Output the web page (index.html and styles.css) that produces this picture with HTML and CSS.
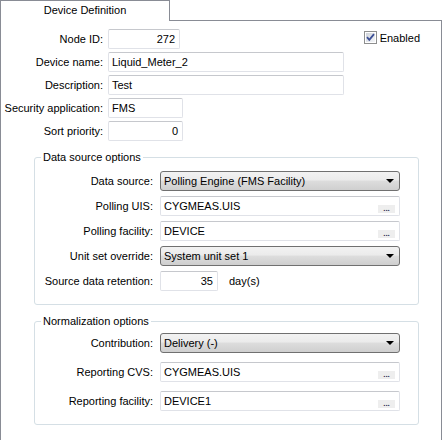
FILE: index.html
```html
<!DOCTYPE html>
<html lang="en">
<head>
  <meta charset="UTF-8">
  <title>Device Definition</title>
  <link rel="stylesheet" href="styles.css">
</head>

<body>
<div class="window">
  <div class="tabstrip">
    <div class="tab">Device Definition</div>
    <div class="tab-fill"></div>
  </div>

  <div class="panel">
    <div class="general">
      <div class="row">
        <span class="label">Node ID:</span>
        <div class="box num w-id">272</div>
        <label class="check">
          <svg class="checkbox" width="13" height="13" viewBox="0 0 13 13">
            <defs>
              <linearGradient id="cbg" x1="0" y1="0" x2="1" y2="1">
                <stop offset="0" stop-color="#cfd3da"/>
                <stop offset="1" stop-color="#f4f6f9"/>
              </linearGradient>
            </defs>
            <rect x="0.5" y="0.5" width="12" height="12" fill="#fff" stroke="#8e8f8f"/>
            <rect x="2" y="2" width="9" height="9" fill="url(#cbg)"/>
            <path d="M3 6.2 L5.3 8.8 L10 3.2" fill="none" stroke="#3c4f96" stroke-width="1.8"/>
          </svg>
          Enabled
        </label>
      </div>
      <div class="row">
        <span class="label">Device name:</span>
        <div class="box w-long">Liquid_Meter_2</div>
      </div>
      <div class="row">
        <span class="label">Description:</span>
        <div class="box w-long">Test</div>
      </div>
      <div class="row">
        <span class="label">Security application:</span>
        <div class="box w-short">FMS</div>
      </div>
      <div class="row">
        <span class="label">Sort priority:</span>
        <div class="box num w-short">0</div>
      </div>
    </div>

    <fieldset class="group group-source">
      <legend>Data source options</legend>
      <div class="grid">
        <span class="label">Data source:</span>
        <div class="combo"><span>Polling Engine (FMS Facility)</span><i class="arrow"></i></div>

        <span class="label">Polling UIS:</span>
        <div class="box"><span>CYGMEAS.UIS</span><b class="dots">...</b></div>

        <span class="label">Polling facility:</span>
        <div class="box"><span>DEVICE</span><b class="dots">...</b></div>

        <span class="label">Unit set override:</span>
        <div class="combo"><span>System unit set 1</span><i class="arrow"></i></div>

        <span class="label">Source data retention:</span>
        <div class="inline">
          <div class="box num w-days">35</div>
          <span class="unit">day(s)</span>
        </div>
      </div>
    </fieldset>

    <fieldset class="group group-norm">
      <legend>Normalization options</legend>
      <div class="grid">
        <span class="label">Contribution:</span>
        <div class="combo"><span>Delivery (-)</span><i class="arrow"></i></div>

        <span class="label">Reporting CVS:</span>
        <div class="box"><span>CYGMEAS.UIS</span><b class="dots">...</b></div>

        <span class="label">Reporting facility:</span>
        <div class="box"><span>DEVICE1</span><b class="dots">...</b></div>
      </div>
    </fieldset>
  </div>
</div>
</body>
</html>
```

FILE: styles.css
```css
* {
  margin: 0;
  padding: 0;
  box-sizing: border-box;
}

html, body {
  height: 100%;
  overflow: hidden;
}

body {
  background: #fff;
  color: #000;
  font-family: "Liberation Sans", Arial, sans-serif;
  font-size: 11px;
}

.window {
  width: 442px;
}

/* tab header */
.tabstrip {
  display: flex;
  height: 21px;
}

.tab {
  width: 170px;
  height: 21px;
  border: 1px solid #898c95;
  border-bottom: none;
  text-align: center;
  line-height: 19px;
}

.tab-fill {
  flex: 1;
  border-bottom: 1px solid #898c95;
}

.panel {
  height: calc(100vh - 21px);
  border-left: 1px solid #898c95;
  border-right: 1px solid #898c95;
  padding-top: 8px;
}

/* top section */
.general {
  display: flex;
  flex-direction: column;
  gap: 3px;
}

.row {
  display: flex;
  align-items: center;
  height: 20px;
}

.label {
  white-space: nowrap;
  text-align: right;
}

.general .label {
  width: 102px;
  margin-right: 5px;
}

.check {
  display: flex;
  align-items: center;
  gap: 3px;
  margin-left: auto;
  margin-right: 21px;
  align-self: flex-start;
  margin-top: 2px;
}

.checkbox {
  display: block;
}

/* text boxes */
.box {
  display: flex;
  align-items: center;
  height: 20px;
  padding: 0 3px;
  border: 1px solid #e0e2e8;
  border-top-color: #c6c8cd;
  border-radius: 2px;
  background: #fff;
  white-space: nowrap;
}

.box.num {
  justify-content: flex-end;
  padding-right: 4px;
}

.w-id {
  width: 72px;
}

.w-long {
  width: 236px;
}

.w-short {
  width: 75px;
}

.w-days {
  width: 58px;
}

.dots {
  display: block;
  margin-left: auto;
  margin-right: 1px;
  align-self: flex-end;
  margin-bottom: 2px;
  width: 17px;
  height: 8px;
  background: #eeeeee;
  font-weight: bold;
  font-size: 8px;
  line-height: 8px;
  text-align: center;
  color: #302850;
}

/* combo boxes */
.combo {
  display: flex;
  align-items: center;
  height: 20px;
  padding: 0 5px 0 3px;
  border: 1px solid #707070;
  border-radius: 3px;
  background: linear-gradient(#f2f2f2 0%, #ebebeb 45%, #dddddd 50%, #cfcfcf 100%);
  white-space: nowrap;
}

.arrow {
  margin-left: auto;
  width: 0;
  height: 0;
  border-left: 4px solid transparent;
  border-right: 4px solid transparent;
  border-top: 4px solid #000;
}

/* group boxes */
.group {
  width: 385px;
  margin-left: 33px;
  border: 1px solid #d5dfe5;
  border-radius: 3px;
}

.group legend {
  margin-left: 6px;
  padding: 0 2px;
  line-height: 14px;
}

.group-source {
  margin-top: 9px;
  padding: 7px 0 13px 0;
}

.group-norm {
  margin-top: 9px;
  padding: 5px 0 13px 0;
}

.grid {
  display: grid;
  grid-template-columns: 118px 240px;
  column-gap: 7px;
  row-gap: 5px;
  align-items: center;
}

.group-norm .grid {
  row-gap: 9px;
}

.grid > * {
  height: 20px;
}

.grid .label {
  line-height: 20px;
}

.inline {
  display: flex;
  align-items: center;
}

.unit {
  margin-left: 11px;
}
```
